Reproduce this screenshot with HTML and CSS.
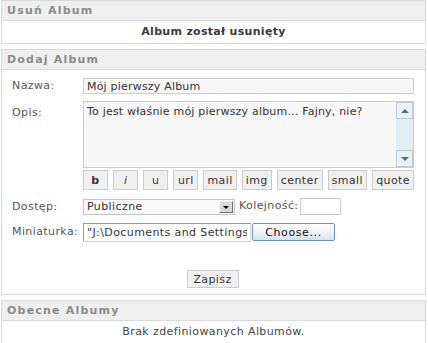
FILE: index.html
```html
<!DOCTYPE html>
<html>
<head>
	<meta charset="utf-8">
	<link rel="stylesheet" href="styles.css">
</head>
<body>
<div class="box">
	<div class="box_title">Usuń Album</div>
	<div class="box_body box_message"><b>Album został usunięty</b></div>
</div>

<div class="box">
	<div class="box_title">Dodaj Album</div>
	<div class="box_body album_form">
		<label class="form_label label_nazwa">Nazwa:</label>
		<input class="form_text field_nazwa" type="text" value="Mój pierwszy Album">

		<label class="form_label label_opis">Opis:</label>
		<div class="field_opis">
			<div class="textarea_wrap">
				<textarea class="form_textarea">To jest właśnie mój pierwszy album... Fajny, nie?</textarea>
				<div class="scrollbar">
					<span class="scroll_btn"><span class="arrow_up"></span></span>
					<span class="scroll_btn"><span class="arrow_down"></span></span>
				</div>
			</div>
			<div class="bbcode_buttons">
				<button class="bb bb_bold">b</button>
				<button class="bb bb_italic">i</button>
				<button class="bb">u</button>
				<button class="bb">url</button>
				<button class="bb">mail</button>
				<button class="bb">img</button>
				<button class="bb">center</button>
				<button class="bb">small</button>
				<button class="bb">quote</button>
			</div>
		</div>

		<label class="form_label label_dostep">Dostęp:</label>
		<div class="field_dostep">
			<div class="select_box">
				<span class="select_value">Publiczne</span>
				<span class="select_arrow"><span class="arrow_down dark"></span></span>
			</div>
			<span class="order_label">Kolejność:</span>
			<input class="order_input" type="text" value="">
		</div>

		<label class="form_label label_mini">Miniaturka:</label>
		<div class="field_mini">
			<input class="file_text" type="text" value="&quot;J:\Documents and Settings\">
			<button class="choose_button">Choose...</button>
		</div>

		<div class="submit_row">
			<button class="submit_button">Zapisz</button>
		</div>
	</div>
</div>

<div class="box">
	<div class="box_title">Obecne Albumy</div>
	<div class="box_body box_message">Brak zdefiniowanych Albumów.</div>
</div>
</body>
</html>
```

FILE: styles.css
```css
html {
	background: white;
}

body {
	margin: 0;
	padding: 0 2px 0 1px;
	font-family: "DejaVu Sans", Verdana, sans-serif;
	font-size: 11px;
	letter-spacing: 0.4px;
	color: #444;
}

.box {
	border: 1px solid #d9d9d9;
	margin-bottom: 5px;
	background: white;
}

.box_title {
	height: 19px;
	line-height: 19px;
	padding: 0 5px;
	background: #efefef;
	border-bottom: 1px solid #d9d9d9;
	color: #8a8a8a;
	font-weight: bold;
	letter-spacing: 1.2px;
}

.box_message {
	height: 22px;
	line-height: 22px;
	text-align: center;
	color: #444;
}

.box_message b {
	color: #3a3a3a;
	letter-spacing: 0.3px;
}

/* form */

.album_form {
	display: grid;
	grid-template-columns: 71px 1fr;
	padding: 8px 11px 6px 10px;
}

.form_label {
	line-height: 14px;
	color: #555;
}

input, textarea, button {
	font-family: "DejaVu Sans", Verdana, sans-serif;
	font-size: 11px;
	letter-spacing: 0.4px;
	color: #333;
	box-sizing: border-box;
	margin: 0;
}

.form_text {
	height: 16px;
	border: 1px solid #cccccc;
	background: #f7f7f7;
	padding: 0 3px;
	outline: none;
	letter-spacing: 0.2px;
}

.label_nazwa {
	padding-top: 1px;
}

.label_opis {
	margin-top: 7px;
	padding-top: 5px;
}

.field_opis {
	margin-top: 7px;
}

.textarea_wrap {
	display: flex;
	height: 65px;
	border: 1px solid #cccccc;
	background: #f7f7f7;
}

.form_textarea {
	flex: 1;
	border: 0;
	background: transparent;
	resize: none;
	padding: 3px 3px;
	outline: none;
	overflow: hidden;
	line-height: 14px;
	letter-spacing: 0.2px;
}

.scrollbar {
	width: 17px;
	display: flex;
	flex-direction: column;
	justify-content: space-between;
	background: #e3edf4;
}

.scroll_btn {
	height: 17px;
	box-sizing: border-box;
	border: 1px solid #b9cad9;
	background: #eaf1f7;
	display: flex;
	align-items: center;
	justify-content: center;
}

.arrow_up {
	width: 0;
	height: 0;
	border-left: 4px solid transparent;
	border-right: 4px solid transparent;
	border-bottom: 4px solid #5f6c78;
}

.arrow_down {
	width: 0;
	height: 0;
	border-left: 4px solid transparent;
	border-right: 4px solid transparent;
	border-top: 4px solid #5f6c78;
}

.arrow_down.dark {
	border-left-width: 3px;
	border-right-width: 3px;
	border-top: 3px solid black;
}

.bbcode_buttons {
	display: flex;
	justify-content: space-between;
	margin-top: 2px;
}

.bb {
	height: 20px;
	min-width: 25px;
	padding: 0 3px;
	border: 1px solid #cccccc;
	background: #f0f0f0;
	color: #333;
	cursor: pointer;
}

.bb_bold {
	font-weight: bold;
}

.bb_italic {
	font-style: italic;
}

.label_dostep {
	margin-top: 9px;
	padding-top: 1px;
}

.field_dostep {
	margin-top: 8px;
	display: flex;
	align-items: flex-start;
}

.select_box {
	width: 152px;
	height: 16px;
	margin-top: 1px;
	box-sizing: border-box;
	border: 1px solid #c4c4c4;
	background: #f9f9f9;
	display: flex;
	align-items: center;
	justify-content: space-between;
}

.select_value {
	padding-left: 3px;
	line-height: 14px;
	color: #333;
}

.select_arrow {
	width: 14px;
	height: 12px;
	margin-right: 1px;
	box-sizing: border-box;
	background: #d8d8d8;
	border: 1px solid;
	border-color: #ffffff #6e6e6e #6e6e6e #ffffff;
	display: flex;
	align-items: center;
	justify-content: center;
}

.order_label {
	margin-left: 4px;
	line-height: 16px;
	color: #555;
}

.order_input {
	width: 41px;
	height: 17px;
	margin-left: 2px;
	border: 1px solid #cccccc;
	background: white;
	outline: none;
}

.label_mini {
	margin-top: 8px;
	padding-top: 2px;
}

.field_mini {
	margin-top: 8px;
	display: flex;
	align-items: flex-start;
}

.file_text {
	width: 168px;
	height: 19px;
	border: 1px solid;
	border-color: #7f9db9 #c9d6e2 #c9d6e2 #7f9db9;
	background: white;
	padding: 0 3px;
	outline: none;
}

.choose_button {
	width: 83px;
	height: 18px;
	margin-left: 1px;
	border: 1px solid #7393b3;
	border-radius: 2px;
	background: linear-gradient(#ffffff, #f1f5f9 45%, #d5e2ee);
	padding: 0;
	color: #111;
	letter-spacing: 0.6px;
}

.submit_row {
	grid-column: 1 / 3;
	display: flex;
	justify-content: center;
	margin-top: 28px;
	padding-right: 1px;
}

.submit_button {
	width: 52px;
	height: 18px;
	border: 1px solid #cccccc;
	background: #f0f0f0;
	padding: 0;
	cursor: pointer;
}
```
